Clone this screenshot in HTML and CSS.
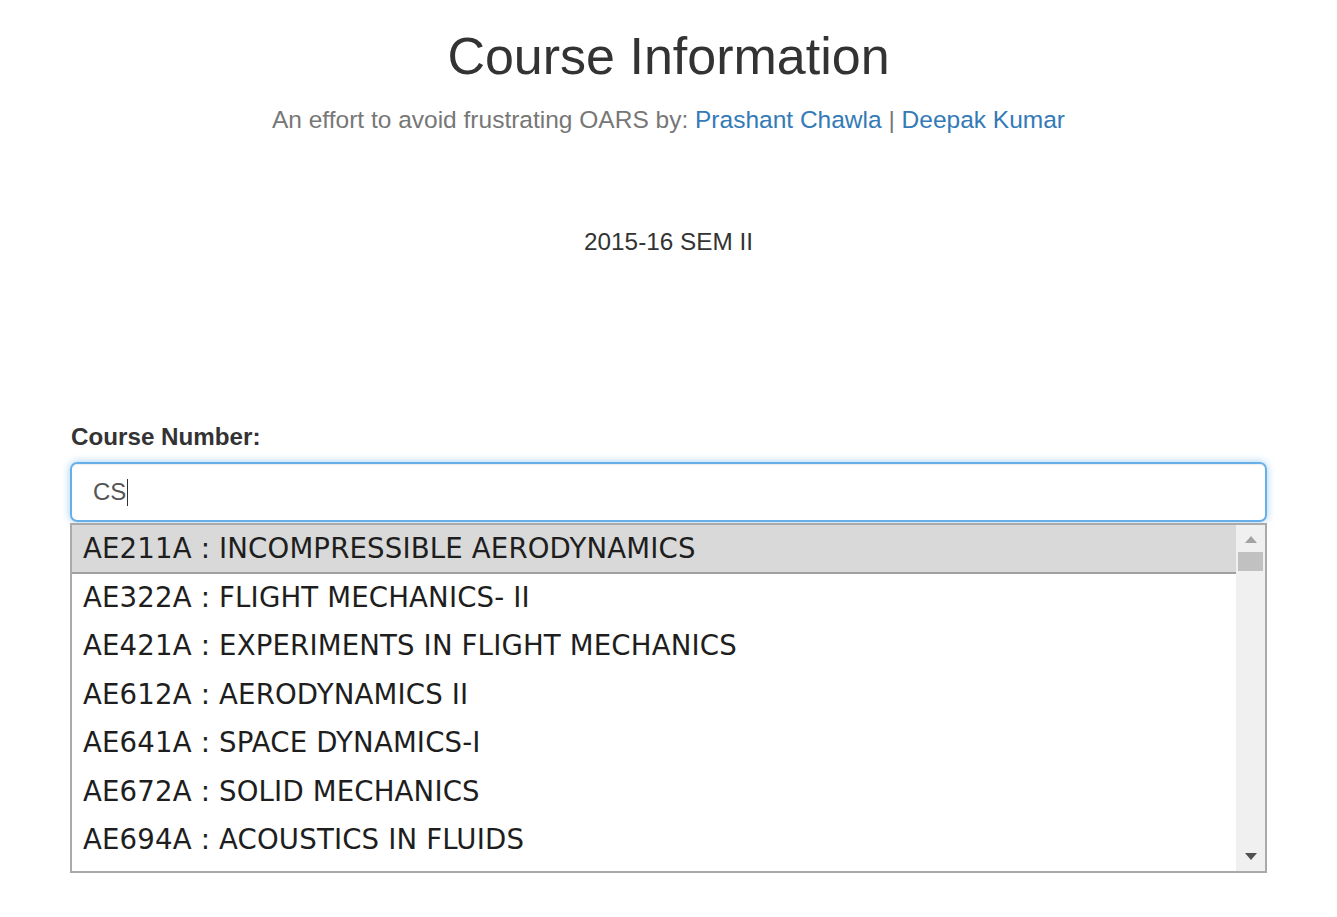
FILE: index.html
```html
<!DOCTYPE html>
<html lang="en">
<head>
<meta charset="utf-8">
<title>Course Information</title>
<link rel="stylesheet" href="styles.css">
</head>
<body>
<div class="page">
  <header class="head">
    <h1 class="title">Course Information</h1>
    <p class="subtitle">An effort to avoid frustrating OARS by: <a class="link" href="#">Prashant Chawla</a> | <a class="link" href="#">Deepak Kumar</a></p>
  </header>
  <p class="sem">2015-16 SEM II</p>
  <div class="form">
    <label class="label">Course Number:</label>
    <div class="input"><span class="input-text">CS</span><span class="caret"></span></div>
    <div class="list">
      <div class="options">
        <div class="option active">AE211A : INCOMPRESSIBLE AERODYNAMICS</div>
        <div class="option">AE322A : FLIGHT MECHANICS- II</div>
        <div class="option">AE421A : EXPERIMENTS IN FLIGHT MECHANICS</div>
        <div class="option">AE612A : AERODYNAMICS II</div>
        <div class="option">AE641A : SPACE DYNAMICS-I</div>
        <div class="option">AE672A : SOLID MECHANICS</div>
        <div class="option">AE694A : ACOUSTICS IN FLUIDS</div>
      </div>
      <div class="scrollbar">
        <span class="arrow up"></span>
        <span class="thumb"></span>
        <span class="track"></span>
        <span class="arrow down"></span>
      </div>
    </div>
  </div>
</div>
</body>
</html>
```

FILE: styles.css
```css
* { box-sizing: border-box; }
html, body { margin: 0; padding: 0; background: #fff; }
body {
  font-family: "Liberation Sans", Arial, Helvetica, sans-serif;
  color: #333;
  font-size: 24px;
  line-height: 1.2;
}
.page { padding: 0 70px; }
.head { text-align: center; }
.title {
  margin: 28px 0 0;
  font-size: 52px;
  font-weight: normal;
  line-height: 57px;
  color: #333;
}
.subtitle {
  margin: 20px 0 0;
  font-size: 24.5px;
  line-height: 29px;
  color: #777;
}
.link { color: #337ab7; text-decoration: none; }
.sem {
  margin: 93px 0 0;
  text-align: center;
  font-size: 24.3px;
  line-height: 29px;
  color: #333;
}
.form { margin-top: 166px; display: flex; flex-direction: column; }
.label {
  font-weight: bold;
  font-size: 24.2px;
  line-height: 29px;
  color: #333;
  padding-left: 1px;
}
.input {
  margin-top: 11px;
  height: 60px;
  border: 2px solid #66afe9;
  border-radius: 7px;
  box-shadow: inset 0 1px 1px rgba(0,0,0,.075), 0 0 8px rgba(102,175,233,.6);
  display: flex;
  align-items: center;
  padding-left: 21px;
  font-size: 24px;
  color: #555;
}
.caret {
  display: inline-block;
  width: 1px;
  height: 27px;
  background: #333;
  margin-left: 1px;
}
.list {
  margin-top: 1px;
  height: 350px;
  border: 2px solid #aaaaaa;
  display: flex;
  overflow: hidden;
  background: #fff;
}
.options {
  flex: 1;
  overflow: hidden;
  font-family: "DejaVu Sans", Verdana, sans-serif;
  font-size: 27.6px;
  letter-spacing: 0.15px;
  color: #1e1e1e;
}
.option {
  height: 48.5px;
  line-height: 48.5px;
  padding-left: 11px;
  white-space: nowrap;
}
.option.active {
  background: #d9d9d9;
  box-shadow: inset 0 -2px 0 #a0a0a0;
}
.scrollbar {
  width: 29px;
  background: #f0f0f0;
  display: flex;
  flex-direction: column;
  align-items: center;
}
.arrow {
  width: 0;
  height: 0;
  border-left: 6.5px solid transparent;
  border-right: 6.5px solid transparent;
}
.arrow.up {
  margin-top: 11px;
  border-bottom: 7px solid #a3a3a3;
}
.thumb {
  margin-top: 9px;
  width: 25px;
  height: 19px;
  background: #c1c1c1;
}
.track { flex: 1; }
.arrow.down {
  margin-bottom: 11px;
  border-top: 7px solid #505050;
}
```
